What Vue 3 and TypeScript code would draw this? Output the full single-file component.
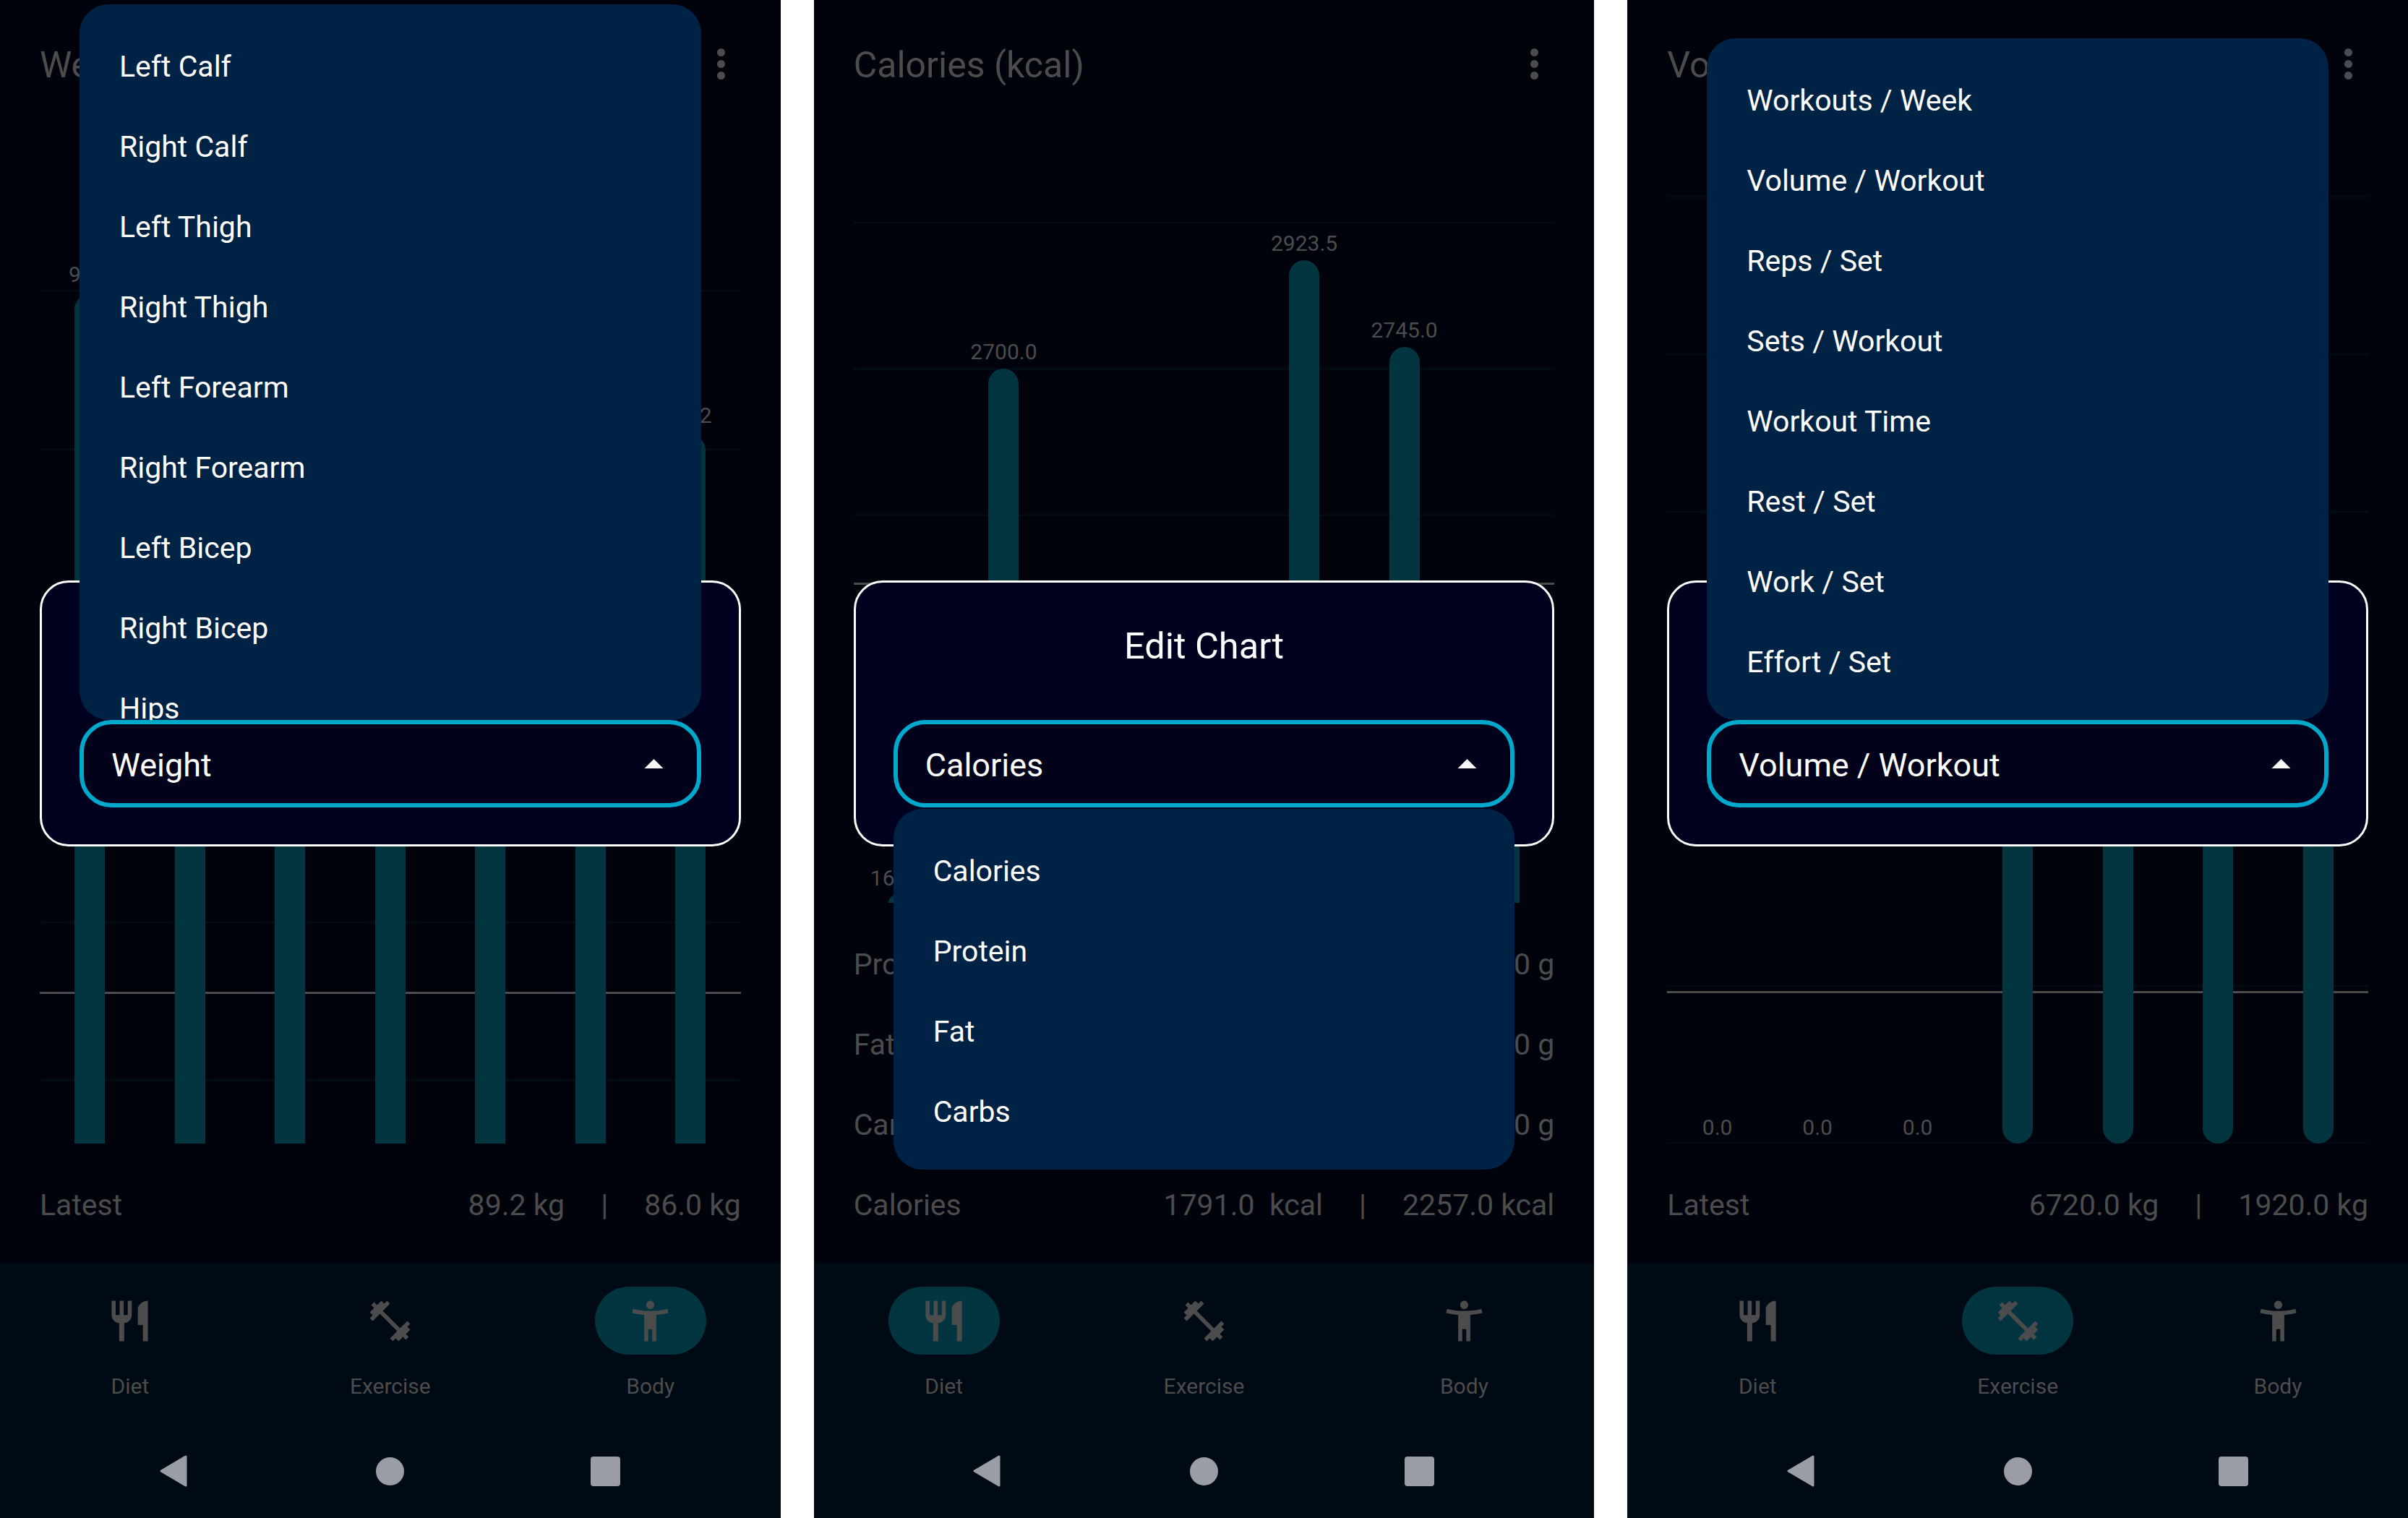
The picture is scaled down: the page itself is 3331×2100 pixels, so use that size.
<script setup lang="ts">
interface Bar {
  label: string;
  top: number;
}

interface SummaryRow {
  label: string;
  latest: string;
  target: string;
}

interface ChartScreen {
  title: string;
  selected: string;
  activeTab: string;
  menuTop: number;
  menuHeight: number;
  options: string[];
  bottom: number;
  roundBars: boolean;
  labelGap: number;
  axis: number;
  lines: number[];
  bars: Bar[];
  rows: SummaryRow[];
}

// y values below are page pixels, the plot starts under the 180px header
const HEADER = 180;

const screens: ChartScreen[] = [
  {
    title: 'Weight',
    selected: 'Weight',
    activeTab: 'Body',
    menuTop: 6,
    menuHeight: 990,
    options: ['Left Calf', 'Right Calf', 'Left Thigh', 'Right Thigh', 'Left Forearm', 'Right Forearm', 'Left Bicep', 'Right Bicep', 'Hips'],
    bottom: 1581.5,
    roundBars: false,
    labelGap: 9,
    axis: 1373,
    lines: [402, 621, 840, 1058, 1276, 1494],
    bars: [
      { label: '90.0', top: 407 },
      { label: '89.8', top: 455 },
      { label: '89.6', top: 504 },
      { label: '89.5', top: 528 },
      { label: '89.4', top: 552 },
      { label: '89.3', top: 578 },
      { label: '89.2', top: 602 },
    ],
    rows: [{ label: 'Latest', latest: '89.2 kg', target: '86.0 kg' }],
  },
  {
    title: 'Calories (kcal)',
    selected: 'Calories',
    activeTab: 'Diet',
    menuTop: 1119,
    menuHeight: 499,
    options: ['Calories', 'Protein', 'Fat', 'Carbs'],
    bottom: 1248.5,
    roundBars: false,
    labelGap: 5,
    axis: 807,
    lines: [307, 510, 712, 914, 1116],
    bars: [
      { label: '1617.0', top: 1238 },
      { label: '2700.0', top: 510 },
      { label: '1700.0', top: 1180 },
      { label: '1750.0', top: 1150 },
      { label: '2923.5', top: 360 },
      { label: '2745.0', top: 480 },
      { label: '1791.0', top: 1120 },
    ],
    rows: [
      { label: 'Protein', latest: '130.0 g', target: '170.0 g' },
      { label: 'Fat', latest: '60.0 g', target: '70.0 g' },
      { label: 'Carbs', latest: '190.0 g', target: '240.0 g' },
      { label: 'Calories', latest: '1791.0  kcal', target: '2257.0 kcal' },
    ],
  },
  {
    title: 'Volume / Workout',
    selected: 'Volume / Workout',
    activeTab: 'Exercise',
    menuTop: 53,
    menuHeight: 943,
    options: ['Workouts / Week', 'Volume / Workout', 'Reps / Set', 'Sets / Workout', 'Workout Time', 'Rest / Set', 'Work / Set', 'Effort / Set'],
    bottom: 1581.5,
    roundBars: true,
    labelGap: 4,
    axis: 1372,
    lines: [271, 490, 708, 927, 1145, 1363, 1581],
    bars: [
      { label: '0.0', top: 1581.5 },
      { label: '0.0', top: 1581.5 },
      { label: '0.0', top: 1581.5 },
      { label: '7680.0', top: 744 },
      { label: '8400.0', top: 666 },
      { label: '7200.0', top: 796 },
      { label: '6720.0', top: 849 },
    ],
    rows: [{ label: 'Latest', latest: '6720.0 kg', target: '1920.0 kg' }],
  },
];

const tabs = [
  {
    name: 'Diet',
    path: 'M11 9H9V2H7v7H5V2H3v7c0 2.12 1.66 3.84 3.75 3.97V22h2.5v-9.03C11.34 12.84 13 11.12 13 9V2h-2v7zm5-3v8h2.5v8H21V2c-2.76 0-5 2.24-5 4z',
  },
  {
    name: 'Exercise',
    path: 'M20.57 14.86L22 13.43 20.57 12 17 15.57 8.43 7 12 3.43 10.57 2 9.14 3.43 7.71 2 5.57 4.14 4.14 2.71 2.71 4.14l1.43 1.43L2 7.71l1.43 1.43L2 10.57 3.43 12 7 8.43 15.57 17 12 20.57 13.43 22l1.43-1.43L16.29 22l2.14-2.14 1.43 1.43 1.43-1.43-1.43-1.43L22 16.29z',
  },
  {
    name: 'Body',
    path: 'M20.5 6c-2.61.7-5.67 1-8.5 1s-5.89-.3-8.5-1L3 8c1.86.5 4 .83 6 1v13h2v-6h2v6h2V9c2-.17 4.14-.5 6-1l-.5-2zM12 6c1.1 0 2-.9 2-2s-.9-2-2-2-2 .9-2 2 .9 2 2 2z',
  },
];
</script>

<template>
  <div class="page">
    <section v-for="screen in screens" :key="screen.title" class="screen">
      <main class="content">
        <header class="chart-header">
          <h2 class="chart-title">{{ screen.title }}</h2>
          <div class="kebab"><i /><i /><i /></div>
        </header>

        <div class="plot">
          <div
            v-for="line in screen.lines"
            :key="line"
            class="grid-line"
            :style="{ top: `${line - HEADER}px` }"
          />
          <div class="axis-line" :style="{ top: `${screen.axis - HEADER}px` }" />
          <div v-for="(bar, i) in screen.bars" :key="i" class="column">
            <span class="bar-label" :style="{ marginBottom: `${screen.labelGap}px` }">{{ bar.label }}</span>
            <div
              class="bar"
              :class="{ round: screen.roundBars }"
              :style="{ height: `${screen.bottom - bar.top}px` }"
            />
          </div>
        </div>

        <div class="summary">
          <div v-for="row in screen.rows" :key="row.label" class="summary-row">
            <span>{{ row.label }}</span>
            <div class="summary-values">
              <span>{{ row.latest }}</span>
              <span>|</span>
              <span>{{ row.target }}</span>
            </div>
          </div>
        </div>
      </main>

      <footer class="bottom">
        <nav class="tabs">
          <div v-for="tab in tabs" :key="tab.name" class="tab">
            <div class="tab-pill" :class="{ active: tab.name === screen.activeTab }">
              <svg class="tab-icon" viewBox="0 0 24 24"><path :d="tab.path" /></svg>
            </div>
            <span class="tab-label">{{ tab.name }}</span>
          </div>
        </nav>
        <div class="system-bar">
          <svg class="sys-back" viewBox="0 0 38 44"><path d="M36 2V42L2 22Z" /></svg>
          <div class="sys-home" />
          <div class="sys-recent" />
        </div>
      </footer>

      <!-- dialog and its open dropdown lie over the chart -->
      <div class="dialog">
        <h3 class="dialog-title">Edit Chart</h3>
        <div class="field">
          <span class="field-value">{{ screen.selected }}</span>
          <svg class="field-arrow" viewBox="7 9 10 5"><path d="M7 14l5-5 5 5z" /></svg>
        </div>
      </div>
      <ul class="menu" :style="{ top: `${screen.menuTop}px`, height: `${screen.menuHeight}px` }">
        <li v-for="option in screen.options" :key="option">{{ option }}</li>
      </ul>
    </section>
  </div>
</template>

<style scoped>
.page {
  display: grid;
  grid-template-columns: repeat(3, 1fr);
  gap: 46px;
  width: 3331px;
  height: 2100px;
  background: #fff;
  font-family: Roboto, "Liberation Sans", sans-serif;
}

.screen {
  position: relative;
  display: flex;
  flex-direction: column;
  overflow: hidden;
  background: #00020c;
  color: #4c4c4c;
}

.content {
  display: flex;
  flex-direction: column;
  height: 1748px;
  padding: 0 55px 25.5px;
  box-sizing: border-box;
}

.chart-header {
  display: flex;
  flex: none;
  align-items: center;
  justify-content: space-between;
  height: 180px;
}

.chart-title {
  margin: 0;
  font-size: 50px;
  font-weight: 400;
}

.kebab {
  display: flex;
  flex-direction: column;
  gap: 5px;
  margin-right: 22px;
  margin-bottom: 4px;
}

.kebab i {
  display: block;
  width: 11px;
  height: 11px;
  border-radius: 50%;
  background: #4c4c4c;
}

.plot {
  position: relative;
  display: flex;
  flex: 1;
  overflow: hidden;
}

.grid-line,
.axis-line {
  position: absolute;
  left: 0;
  right: 0;
  height: 3px;
  margin-top: -1.5px;
  background: #000b14;
}

.axis-line {
  background: #4c4c4c;
}

.column {
  position: relative;
  display: flex;
  flex: 1;
  flex-direction: column;
  align-items: center;
  justify-content: flex-end;
  min-width: 0;
}

.bar-label {
  font-size: 30px;
  line-height: 36px;
}

.bar {
  width: 42px;
  border-radius: 21px 21px 0 0;
  background: #023540;
}

.bar.round {
  border-radius: 21px;
}

.summary {
  flex: none;
  margin-top: 30px;
}

.summary-row {
  display: flex;
  align-items: center;
  justify-content: space-between;
  height: 111px;
  font-size: 41px;
}

.summary-values {
  display: flex;
  gap: 50px;
  white-space: pre;
}

.bottom {
  flex: 1;
  padding-bottom: 6px;
  background: #000a14;
}

.tabs {
  display: grid;
  grid-template-columns: repeat(3, 1fr);
  height: 228px;
}

.tab {
  display: flex;
  flex-direction: column;
  align-items: center;
  padding-top: 32px;
}

.tab-pill {
  display: flex;
  align-items: center;
  justify-content: center;
  width: 154px;
  height: 94px;
  border-radius: 47px;
}

.tab-pill.active {
  background: #023540;
}

.tab-icon {
  width: 67px;
  height: 67px;
  fill: #4c4c4c;
}

.tab-label {
  margin-top: 26px;
  font-size: 30px;
  line-height: 36px;
}

.system-bar {
  display: grid;
  grid-template-columns: repeat(3, 300px);
  justify-content: center;
  justify-items: center;
  align-items: center;
  height: 118px;
}

.sys-back {
  width: 38px;
  height: 44px;
  fill: #9a9ea4;
  stroke: #9a9ea4;
  stroke-width: 3;
  stroke-linejoin: round;
}

.sys-home {
  width: 39px;
  height: 39px;
  border-radius: 50%;
  background: #9a9ea4;
}

.sys-recent {
  width: 41px;
  height: 41px;
  margin-right: 4px;
  border-radius: 4px;
  background: #9a9ea4;
}

.dialog {
  position: absolute;
  top: 803px;
  left: 55px;
  right: 55px;
  height: 368px;
  padding: 0 52px;
  box-sizing: border-box;
  border: 3px solid #fff;
  border-radius: 40px;
  background: #00001f;
  color: #fff;
}

.dialog-title {
  display: flex;
  align-items: center;
  justify-content: center;
  height: 174px;
  margin: 0 0 16px;
  font-size: 50.5px;
  font-weight: 400;
}

.field {
  position: relative;
  z-index: 2;
  display: flex;
  align-items: center;
  justify-content: space-between;
  height: 121px;
  padding: 0 46px 0 38px;
  box-sizing: border-box;
  border: 6px solid #00a8cc;
  border-radius: 44px;
  background: #03021b;
  font-size: 45px;
}

.field-value {
  padding-top: 3px;
}

.field-arrow {
  width: 27px;
  height: 13.5px;
  fill: #f6f6f6;
}

.menu {
  position: absolute;
  left: 110px;
  right: 110px;
  margin: 0;
  padding: 30px 0 0;
  box-sizing: border-box;
  overflow: hidden;
  list-style: none;
  border-radius: 40px;
  background: #002244;
  color: #fff;
  font-size: 41px;
}

.menu li {
  display: flex;
  align-items: center;
  height: 111px;
  padding-left: 55px;
}
</style>

<style>
body {
  background: #fff;
}
</style>
